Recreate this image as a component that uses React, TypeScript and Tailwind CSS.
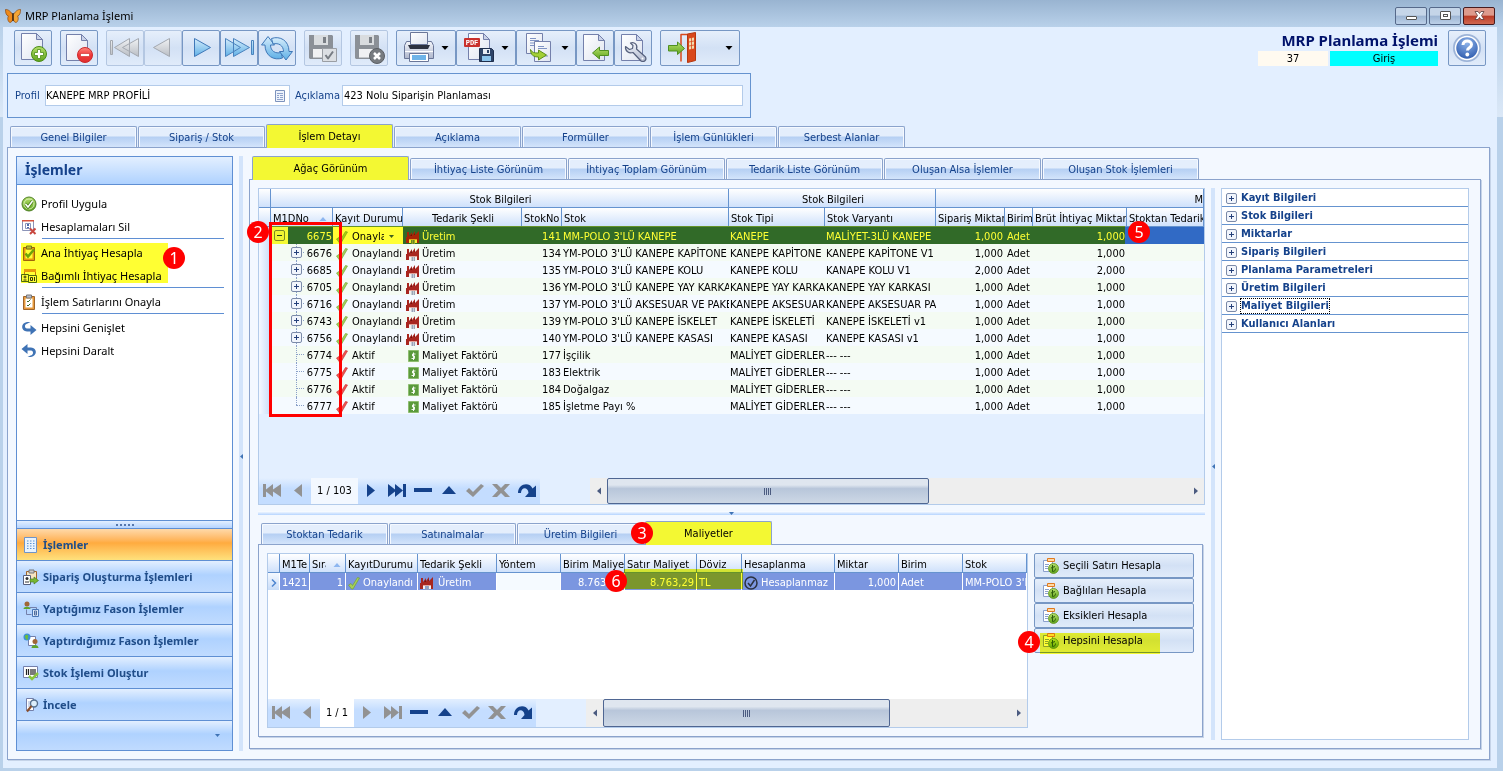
import React from "react";

type Children = { children?: React.ReactNode };

const Badge: React.FC<{ n: number; className: string }> = ({ n, className }) => (
    <span className={`absolute z-20 flex size-[22px] items-center justify-center rounded-full bg-[#ff0000] font-['Noto_Sans',sans-serif] text-base text-white ${className}`}>
        {n}
    </span>
);

const Marker: React.FC<{ className: string }> = ({ className }) => (
    <span className={`pointer-events-none absolute z-10 bg-[#ffff33] mix-blend-multiply ${className}`}/>
);

const Caret: React.FC<{ className?: string }> = ({ className = "" }) => (
    <svg className={`h-1 w-2 shrink-0 ${className}`} viewBox="0 0 8 4" fill="currentColor"><path d="M.5 0h7L4 4z"/></svg>
);

/* ---------- toolbar icons ---------- */

const Gradients: React.FC = () => (
    <svg className="absolute size-0" aria-hidden="true">
        <defs>
            <linearGradient id="paper" x1="0" y1="0" x2="1" y2="1"><stop stopColor="#fff"/><stop offset="1" stopColor="#dfe4f0"/></linearGradient>
            <linearGradient id="green" x1="0" y1="0" x2="0" y2="1"><stop stopColor="#b5e06a"/><stop offset="1" stopColor="#5fa41d"/></linearGradient>
            <linearGradient id="red" x1="0" y1="0" x2="0" y2="1"><stop stopColor="#ff8a80"/><stop offset=".5" stopColor="#f0383a"/><stop offset="1" stopColor="#e03030"/></linearGradient>
            <linearGradient id="blue" x1="0" y1="0" x2="0" y2="1"><stop stopColor="#d5ecfb"/><stop offset="1" stopColor="#5fb0e6"/></linearGradient>
            <linearGradient id="grey" x1="0" y1="0" x2="0" y2="1"><stop stopColor="#f0f2f4"/><stop offset="1" stopColor="#b9bdc4"/></linearGradient>
            <linearGradient id="steel" x1="0" y1="0" x2="0" y2="1"><stop stopColor="#f4f6fb"/><stop offset="1" stopColor="#aeb6cc"/></linearGradient>
            <radialGradient id="help" cx=".5" cy=".3" r=".7"><stop stopColor="#8fb4ea"/><stop offset="1" stopColor="#2553a8"/></radialGradient>
        </defs>
    </svg>
);

const Icon: React.FC<Children> = ({ children }) => (
    <svg className="h-[34px] w-9 shrink-0" viewBox="0 0 36 34" fill="none" strokeLinejoin="round">{children}</svg>
);

const WideIcon: React.FC<Children> = ({ children }) => (
    <svg className="h-[34px] w-11 shrink-0" viewBox="0 0 44 34" fill="none" strokeLinejoin="round">{children}</svg>
);

const Page: React.FC<{ x: number; y: number }> = ({ x, y }) => (
    <g transform={`translate(${x} ${y})`} fill="url(#paper)" stroke="#7480ab">
        <path d="M.5.5h15l6 6v20H.5z"/>
        <path d="M15.5.5v6h6z" fill="#c9d2e8"/>
    </g>
);

const GreyFloppy: React.FC = () => (
    <>
        <path d="M4 4h23l1 1v23H5l-1-1z" fill="#8b9097"/>
        <path d="M9 4h14v10H9z" fill="#d9dcdf"/>
        <path d="M18 6h3v6h-3z" fill="#7a7f86"/>
        <path d="M8 18h16v8H8z" fill="#f0f1f3"/>
        <path d="M8 26.500h16" stroke="#c3c6ca"/>
    </>
);

const NewIcon = () => (
    <Icon>
        <Page x={6} y={2}/>
        <circle cx="24" cy="23" r="7.5" fill="url(#green)" stroke="#4b8c17"/>
        <path d="M22.5 18.5h3v3h3v3h-3v3h-3v-3h-3v-3h3z" fill="#fff" stroke="#4b8c17" strokeWidth=".8"/>
    </Icon>
);

const DeleteIcon = () => (
    <Icon>
        <Page x={5} y={3}/>
        <circle cx="24" cy="24" r="7.5" fill="url(#red)" stroke="#cc2a2c"/>
        <path d="M19.5 22.5h9v3h-9z" fill="#fff" stroke="#c22" strokeWidth=".6"/>
    </Icon>
);

const FirstIcon = () => (
    <Icon>
        <g fill="url(#grey)" stroke="#a3a8b0">
            <path d="M3.5 9.5h2v14h-2zM22.5 7.5v18L7.5 16.5zM31.5 7.5v18l-16-9z"/>
        </g>
    </Icon>
);

const PrevIcon = () => <Icon><path d="M24.5 7.5v18l-16-9z" fill="url(#grey)" stroke="#a3a8b0"/></Icon>;
const NextIcon = () => <Icon><path d="M11.5 7.5v18l16-9z" fill="url(#blue)" stroke="#3f78b8"/></Icon>;

const LastIcon = () => (
    <Icon><path d="M4.5 7.5v18l15-9zM12.5 7.5v18l16-9zM30.5 9.5h2v14h-2z" fill="url(#blue)" stroke="#4a82bd"/></Icon>
);

const RefreshIcon = () => (
    <Icon>
        <g fill="url(#blue)" stroke="#3f78b8">
            <path d="M9 5.5l6.5 8.500h-4c0 6 5 9 10.500 7.500l1.500 5.500C15 30 6 25 6 14H2.500z"/>
            <path d="M27 29l-6.500-8.500h4c0-6-5-9-10.500-7.500L12.500 7.500C21 4.500 30 9.500 30 20.500h3.500z"/>
        </g>
    </Icon>
);

const SaveCheckIcon = () => (
    <Icon>
        <GreyFloppy/>
        <path d="M17.5 17.5h14v13h-14z" fill="#dcdfe3" stroke="#9a9ea4"/>
        <path d="M20.5 24l2.5 3.500 5-7" stroke="#777c83" strokeWidth="2"/>
    </Icon>
);

const SaveCancelIcon = () => (
    <Icon>
        <GreyFloppy/>
        <circle cx="26" cy="25" r="7.5" fill="#777b80" stroke="#5b5f64"/>
        <path d="M23 22l6 6m0-6l-6 6" stroke="#fff" strokeWidth="2.5"/>
    </Icon>
);

const PrintIcon = () => (
    <WideIcon>
        <path d="M9.5 10.5h25l2 4v13h-29v-13z" fill="url(#steel)" stroke="#6a7698"/>
        <path d="M13.5 1.5h17v12h-17z" fill="url(#paper)" stroke="#6a7698"/>
        <path d="M11 14h22l-2 4H13z" fill="#2c3140"/>
        <path d="M8 20.500h28" stroke="#fff"/>
        <path d="M12.5 22.5h19v8h-19z" fill="#fff" stroke="#6a7698"/>
        <path d="M15 24h14v5H15z" fill="#6fb4e8"/>
    </WideIcon>
);

const PdfIcon = () => (
    <WideIcon>
        <Page x={11} y={2}/>
        <rect x="7" y="7" width="16" height="9" rx="1" fill="#c9302c"/>
        <text x="15" y="14" textAnchor="middle" fontSize="7" fontWeight="700" fill="#fff" fontFamily="Liberation Mono, monospace">PDF</text>
        <path d="M22.5 17.5h12l2 2v11h-14z" fill="#2e4468" stroke="#1f2f4d"/>
        <path d="M26 18h7v5h-7z" fill="#e8edf5"/>
        <path d="M30 19h2v3h-2z" fill="#2e4468"/>
        <path d="M25 25h9v5h-9z" fill="#8cc4ec"/>
    </WideIcon>
);

const CopyIcon = () => (
    <WideIcon>
        <path d="M9.5 2.5h16v20h-16z" fill="url(#paper)" stroke="#7480ab"/>
        <path d="M13 7.500h6M13 9.500h9M13 12h5M13 14.500h5" stroke="#7f93c4"/>
        <path d="M17.5 10.5h16v20h-16z" fill="url(#paper)" stroke="#7480ab"/>
        <path d="M21 15.500h6M21 17.500h9M27 25h4" stroke="#7f93c4"/>
        <path d="M13.5 18.500c1 3 4 3.500 8 3.500v-3l8 5-8 5v-3c-5 0-8-2-8-7.500z" fill="#a3cf35" stroke="#5d8f1c"/>
    </WideIcon>
);

const PageBackIcon = () => (
    <Icon>
        <Page x={6} y={3}/>
        <path d="M15.5 22l7-6v3.500h9v5h-9V28z" fill="url(#green)" stroke="#4f8f22"/>
    </Icon>
);

const WrenchIcon = () => (
    <Icon>
        <Page x={6} y={3}/>
        <path d="M15.500 12c4-1.500 7.500 2 6 6l9 8c1.500 3-1.500 5.500-4.500 4l-8-8.500c-4 1.500-8-1.500-7.500-6l4 3 3-1 .5-3z" fill="url(#steel)" stroke="#56607c" strokeWidth="1.200"/>
        <circle cx="27.5" cy="27.5" r="1" fill="#fff"/>
    </Icon>
);

const DoorIcon = () => (
    <WideIcon>
        <path d="M20 30.5V3.5h7" stroke="#d9481c" strokeWidth="1.500"/>
        <path d="M26.500 3l8-1.500v28l-8 2z" fill="#d9481c" stroke="#b5370f"/>
        <path d="M28 7.5l5-1v11l-5 1z" fill="#f2ddb0"/>
        <path d="M30.5 7v11M28 11l5-1M28 15l5-1" stroke="#d9481c" strokeWidth=".8"/>
        <path d="M7.5 14.5h9V11l7 6.500-7 6V20h-9z" fill="url(#green)" stroke="#4f8f22"/>
    </WideIcon>
);

const Butterfly = () => (
    <svg className="size-4" viewBox="0 0 16 16">
        <path d="M8 7.500C6.500 4 3 1 .500 1.500c0 3 .5 6 3 6.500-1.500 2-.5 6 1.500 6.500 2 0 3-3 3-5.500z" fill="#ee8a1c" stroke="#8a4710" strokeWidth=".7"/>
        <path d="M8 7.500C9.500 4 13 1 15.500 1.500c0 3-.5 6-3 6.500 1.500 2 .5 6-1.500 6.500-2 0-3-3-3-5.500z" fill="#f4a637" stroke="#8a4710" strokeWidth=".7"/>
        <path d="M8 5v8" stroke="#3b2410" strokeWidth="1.4"/>
    </svg>
);

/* ---------- small icons ---------- */

const Small: React.FC<Children> = ({ children }) => (
    <svg className="size-4 shrink-0" viewBox="0 0 16 16" fill="none">{children}</svg>
);

const ApproveIcon = () => (
    <Small>
        <circle cx="8" cy="8" r="7" fill="url(#green)" stroke="#4f7f27"/>
        <circle cx="8" cy="8" r="5" stroke="#e4f5c8" strokeWidth=".8"/>
        <path d="M4.5 8l2.5 3 4.500-6" stroke="#4b7d1c" strokeWidth="3"/>
        <path d="M4.5 8l2.5 3 4.500-6" stroke="#fff" strokeWidth="1.5"/>
    </Small>
);

const ClearCalcIcon = () => (
    <Small>
        <path d="M1.5 1.5h11v10h-11z" fill="#fff" stroke="#8c94b8"/>
        <path d="M1 1h12v1.500H1z" fill="#d9533c"/>
        <path d="M4.500 4.500h5v5h-5z" stroke="#8c94b8"/>
        <path d="M6 5h2v2H6zM6 8h2v1H6z" fill="#4f6cab"/>
        <path d="M9 9.500l5.500 5.500M14.500 9.500L9 15" stroke="#c8473f" strokeWidth="2"/>
    </Small>
);

const ClipCheck: React.FC<{ green?: boolean }> = ({ green }) => (
    <Small>
        <path d="M2.5 2.5h11v13h-11z" fill="#e79a3c" stroke="#a0652a"/>
        <path d="M4.5 4.5h7v9h-7z" fill="#fff"/>
        <path d="M5.5 1h5v3h-5z" fill="#b9bcc8" stroke="#777"/>
        {green
            ? <path d="M4.5 8.500l2.500 3L13 4.500" stroke="#6da52b" strokeWidth="2.5"/>
            : <path d="M6 7l1 1 2.500-2.500M6 11l1 1 2.500-2.500" stroke="#3f6b2a"/>}
    </Small>
);

const NumbersIcon = () => (
    <Small>
        <path d="M3.5 1.5h11v10h-11z" fill="#fff" stroke="#c47a2c"/>
        <path d="M3 1h12v3H3z" fill="#e79a3c"/>
        <path d="M.5 6.5h7v7h-7zM7.500 7.500h8v7h-8z" fill="#fff" stroke="#4d6a3c"/>
        <path d="M2.500 9h3M4 7.500v3M2.500 12h3M9.500 9.500h2v3h-2zM13.500 9v4" stroke="#333"/>
    </Small>
);

const TurnArrow: React.FC<{ up?: boolean }> = ({ up }) => (
    <Small>
        <g transform={up ? "matrix(-1 0 0 -1 16 16)" : undefined}>
            <path d="M9.5 2H6C-.5 3-.5 11 6 11.500h3.500V15l6-5-6-5v3.500H6C3 8 3.500 4 6.500 3.500z" fill="#3f73b5"/>
        </g>
    </Small>
);

const ListIcon = () => (
    <Small>
        <path d="M1.5.5h12v15h-12z" fill="#e9f3fd" stroke="#6f94c8"/>
        <path d="M4 4h1.500M7 4h1.500M10 4h1.500M4 6.500h1.500M7 6.500h1.500M10 6.500h1.500M4 9h1.500M7 9h1.500M10 9h1.500M4 11.500h1.500M7 11.500h1.500M10 11.500h1.500" stroke="#5b93d6"/>
    </Small>
);

const OrderIcon = () => (
    <Small>
        <path d="M3.5 2.5h10v10h-10z" fill="#f5e3c0" stroke="#a0652a"/>
        <path d="M6 1h5v3H6z" fill="#ccc" stroke="#777"/>
        <path d="M.5 6.5h7v9h-7z" fill="#fff" stroke="#56607c"/>
        <circle cx="4" cy="9.5" r="1.5" fill="#333"/>
        <path d="M2 13h4" stroke="#333"/>
        <path d="M7 10h4V8l4.500 3.500L11 15v-2H7z" fill="#78b833" stroke="#4b8020" strokeWidth=".7"/>
    </Small>
);

const PersonBoxIcon = () => (
    <Small>
        <circle cx="4" cy="3" r="2.5" fill="#a06636"/>
        <path d="M.5 8c0-3 7-3 7 0z" fill="#5fa52c"/>
        <path d="M3.5 8.500v5h5M6.500 6.500h7v3" stroke="#7480ab"/>
        <path d="M9.5 8.500h6v7h-6z" fill="#dbe9fa" stroke="#4876b5"/>
        <path d="M11.5 10v4M11.500 10h2v4h-2M11.500 12h2" stroke="#33548c" strokeWidth=".8"/>
    </Small>
);

const GlobePersonIcon = () => (
    <Small>
        <path d="M5.5 3.5h7v9h-7z" fill="#fff" stroke="#7480ab"/>
        <circle cx="4" cy="4" r="3.5" fill="#3f8ed6"/>
        <path d="M2 3c2-3 4 0 3 1s1 2-1 3c-1-1-2-2-2-4z" fill="#6bbf3a"/>
        <circle cx="12" cy="8.5" r="2.5" fill="#a06636"/>
        <path d="M8.5 15c0-4 7-4 7 0z" fill="#5fa52c"/>
    </Small>
);

const BarcodeIcon = () => (
    <Small>
        <path d="M.5 1.5h14v11H.5z" fill="#fff" stroke="#7480ab"/>
        <path d="M3.500 4v6M5.500 4v6M8 4v6M10 4v6M12 4v6" stroke="#222" strokeWidth="1.2"/>
        <path d="M6 11l3 3 6-6" stroke="#8cc63f" strokeWidth="2.5"/>
    </Small>
);

const InspectIcon = () => (
    <Small>
        <path d="M3.5 1.5h7v12h-7z" fill="#fff" stroke="#7480ab"/>
        <path d="M5 5h4M5 7h3M5 9h3" stroke="#9fb0d6"/>
        <circle cx="11" cy="6.5" r="3.5" fill="#dceefb" stroke="#56708f" strokeWidth="1.4"/>
        <path d="M8.5 9L4 14.500" stroke="#8a4e2a" strokeWidth="2"/>
    </Small>
);

const LiraIcon = () => (
    <Small>
        <path d="M.5 2.5h9v11h-9z" fill="#fff" stroke="#8ba0cc"/>
        <path d="M2 6.500h4M2 8.500h3M2 10.500h3" stroke="#8ba0cc"/>
        <path d="M4.5.5h7v3h-7z" fill="#ffd9a6" stroke="#e07a1f"/>
        <circle cx="10.5" cy="10.5" r="5" fill="url(#green)" stroke="#5d8f1c" strokeWidth=".8"/>
        <path d="M9.5 7v6.500c2 0 3-1 3-3M8 10l4-1.500" stroke="#2d5c0c"/>
    </Small>
);

const CheckIcon: React.FC<{ color: string; shade: string }> = ({ color, shade }) => (
    <svg className="h-[14px] w-3 shrink-0" viewBox="0 0 12 14" fill="none">
        <path d="M.5 9L3 7.500 4.500 9.500 9.500 1.500 11.500 2 5 13H3.500z" fill={color} stroke={shade} strokeWidth=".6"/>
    </svg>
);

const FactoryIcon = () => (
    <svg className="size-[14px] shrink-0" viewBox="0 0 14 14">
        <path d="M0 13V7h1V2h2v4l3-4v3l3-4v4l4-4v12h-2V9H3v4z" fill="#a8261f"/>
        <path d="M4 6l2-2v2zM8 5l1-2v2z" fill="#6f130f"/>
        <path d="M3 9h8v1H3z" fill="#e2a49b"/>
        <path d="M3 10h2v3H3zM9 10h2v3H9z" fill="#f4efec"/>
        <path d="M5.500 10h1.500v4H5.500zM7.500 10H9v4H7.500z" fill="#9aa3b5"/>
    </svg>
);

const MoneyIcon = () => (
    <svg className="size-[14px] shrink-0" viewBox="0 0 14 14" fill="none">
        <path d="M2.5 1.5h10v11h-10z" fill="#5b9a3c" stroke="#8dbd6f"/>
        <path d="M9.500 5h-3v2h2v2.500H5.500M7.500 3.500v7.500" stroke="#fff" strokeWidth=".9"/>
    </svg>
);

const ToggleBox: React.FC<{ open?: boolean; className?: string }> = ({ open, className = "" }) => (
    <svg className={`size-[11px] shrink-0 ${className}`} viewBox="0 0 11 11" fill="none">
        <rect x=".5" y=".5" width="10" height="10" rx="1.5" fill="#f1f5fc" stroke="#7b8aa8"/>
        <path d={open ? "M3 5.500h5" : "M3 5.500h5M5.500 3v5"} stroke="#25407a"/>
    </svg>
);

/* ---------- building blocks ---------- */

const ToolButton: React.FC<Children & { label: string; disabled?: boolean; className?: string }> = ({ label, disabled, className = "w-[38px]", children }) => (
    <button
        type="button"
        aria-label={label}
        disabled={disabled}
        className={`flex h-9 shrink-0 items-center rounded-xs border bg-linear-to-b from-[#e6effb] via-[#d3e1f5] to-[#e0ebfa] ${disabled ? "border-[#b4c7e2]" : "border-[#7797c4]"} ${className}`}
    >
        {children}
    </button>
);

const TabStrip: React.FC<{ tabs: string[]; active: number; width: string; className?: string; badge?: number }> = ({ tabs, active, width, className = "", badge }) => (
    <div role="tablist" className={`flex h-[23px] shrink-0 items-end gap-px pl-[3px] ${className}`}>
        {tabs.map((tab, i) => i === active ? (
            <button key={tab} type="button" role="tab" aria-selected="true" className={`relative z-10 -mb-px h-6 rounded-t-xs border border-b-0 border-[#8ba3cc] bg-[#f3f8ff] pt-px text-black ${width}`}>
                {tab}
                <Marker className="inset-0"/>
                {badge && <Badge n={badge} className="top-0 -left-[15px]"/>}
            </button>
        ) : (
            <button key={tab} type="button" role="tab" aria-selected="false" className={`h-[21px] rounded-t-xs border border-b-0 border-[#8ba3cc] bg-linear-to-b from-[#e4eefc] from-45% via-[#b5cff3] via-50% to-[#d3e4fb] pt-[2px] text-[#15428b] shadow-[inset_1px_1px_0_#f5f9ff,inset_-1px_0_0_#f5f9ff] ${width}`}>
                {tab}
            </button>
        ))}
    </div>
);

const pagerShapes = [
    { label: "Sonraki", d: "M6 2l8 6.500L6 15z" },
    { label: "Son", d: "M1 2l7 5.500V2l8 6.500V2h3v13h-3V8.500L8 15V9.500L1 15z" },
    { label: "Sil", d: "M1 6h18v4H1z" },
    { label: "Düzenle", d: "M3 12l7-8 7 8z" },
    { label: "Kaydet", d: "M1 9l3-3 4 4 8-8 3 2L8 15z" },
    { label: "Vazgeç", d: "M1 2h5l4 4 4-4h5l-6 6.500 6 6.500h-5l-4-4-4 4H1l6-6.500z" },
    { label: "Yenile", d: "M1 11C1 1 13-.5 15.500 6.500L19 3.500V15H8l3.500-4C11 4.500 4 5 4 11z" },
];

const PagerButton: React.FC<{ label: string; d: string; off: boolean }> = ({ label, d, off }) => (
    <button type="button" aria-label={label} disabled={off} className="flex w-[26px] items-center justify-center bg-linear-to-b from-[#e3efff] via-[#c4ddff] via-40% to-[#c4ddff]">
        <svg className={`h-4 w-5 ${off ? "text-[#929292]" : "text-[#15428b]"}`} viewBox="0 1 20 16" fill="currentColor"><path d={d}/></svg>
    </button>
);

const Pager: React.FC<{ text: string; textClass: string; off: string[]; height: string; thumb: string }> = ({ text, textClass, off, height, thumb }) => (
    <div className={`flex shrink-0 bg-[#e3efff] ${height}`}>
        <PagerButton label="İlk" off d="M1 2h3v5.500L11 2v5.500L19 2v13l-8-5.500V15L4 9.500V15H1z"/>
        <PagerButton label="Önceki" off d="M14 2L6 8.500l8 6.500z"/>
        <span className={`flex shrink-0 items-center justify-center ${textClass}`}>{text}</span>
        {pagerShapes.map((s) => <PagerButton key={s.label} label={s.label} d={s.d} off={off.includes(s.label)}/>)}
        <div className="ml-[50px] flex min-w-0 flex-1 bg-[#eeeeee]">
            <span className="flex w-[17px] items-center justify-center text-[#4b5b80]"><Caret className="rotate-90"/></span>
            <div className="min-w-0 flex-1">
                <div className={`flex h-full items-center justify-center gap-px rounded-xs border border-[#4f6692] bg-linear-to-b from-[#dfe6ef] from-25% via-[#b8c6da] via-40% to-[#cdd8e6] ${thumb}`}>
                    {[0, 1, 2, 3].map((i) => <i key={i} className="h-[7px] w-px bg-[#4b5b80]"/>)}
                </div>
            </div>
            <span className="flex w-[17px] items-center justify-center text-[#4b5b80]"><Caret className="-rotate-90"/></span>
        </div>
    </div>
);

const Th: React.FC<Children & { className?: string; colSpan?: number }> = ({ children, className = "", colSpan }) => (
    <th colSpan={colSpan} className={`h-[19px] overflow-hidden border-r border-b border-[#6593cf] bg-linear-to-b from-white to-[#cfe1fb] p-0 pt-[3px] pl-[2px] font-normal ${className}`}>
        {children}
    </th>
);

const SortMark = () => <Caret className="rotate-180 text-[#8db6f0]"/>;

/* ---------- top of the window ---------- */

const TitleBar: React.FC = () => (
    <header className="flex h-[27px] shrink-0 items-center gap-1 bg-linear-to-b from-[#99b4d1] to-[#b9d1ea] pt-1 pr-2 pl-[5px]">
        <Butterfly/>
        <h1 className="flex-1 font-['Noto_Sans',sans-serif] text-[11px] text-black">MRP Planlama İşlemi</h1>
        <div className="flex gap-[2px]">
            <button type="button" aria-label="Küçült" className="flex h-[18px] w-8 items-center justify-center rounded-xs border border-[#56698a] bg-linear-to-b from-[#c5d5e8] from-45% via-[#9db5d3] via-50% to-[#bcd0e8]">
                <i className="mt-1 h-1 w-[11px] rounded-[1px] border border-[#555] bg-white"/>
            </button>
            <button type="button" aria-label="Büyüt" className="flex h-[18px] w-8 items-center justify-center rounded-xs border border-[#56698a] bg-linear-to-b from-[#c5d5e8] from-45% via-[#9db5d3] via-50% to-[#bcd0e8]">
                <i className="flex h-[9px] w-[11px] items-center justify-center rounded-[1px] border border-[#555] bg-white"><i className="h-[3px] w-[5px] border border-[#555]"/></i>
            </button>
            <button type="button" aria-label="Kapat" className="flex h-[18px] w-8 items-center justify-center rounded-xs border border-[#471b1e] bg-linear-to-b from-[#dd9a8c] from-45% via-[#b93a25] via-50% to-[#d0664f]">
                <svg className="h-[9px] w-[11px]" viewBox="0 0 11 9"><path d="M1 .5h3l1.500 2L7 .5h3L7.500 4.500l2.500 4H7l-1.500-2-1.500 2H1l2.500-4z" fill="#fff" stroke="#5b3a3a" strokeWidth=".8"/></svg>
            </button>
        </div>
    </header>
);

const Toolbar: React.FC = () => (
    <div className="flex justify-between pt-[3px] pr-1 pl-[7px]">
        <div className="flex gap-2">
            <ToolButton label="Yeni"><NewIcon/></ToolButton>
            <ToolButton label="Sil"><DeleteIcon/></ToolButton>
            <div className="flex">
                <ToolButton label="İlk kayıt" disabled><FirstIcon/></ToolButton>
                <ToolButton label="Önceki kayıt" disabled><PrevIcon/></ToolButton>
                <ToolButton label="Sonraki kayıt"><NextIcon/></ToolButton>
                <ToolButton label="Son kayıt"><LastIcon/></ToolButton>
                <ToolButton label="Yenile"><RefreshIcon/></ToolButton>
            </div>
            <ToolButton label="Kaydet" disabled><SaveCheckIcon/></ToolButton>
            <ToolButton label="Vazgeç" disabled><SaveCancelIcon/></ToolButton>
            <div className="flex">
                <ToolButton label="Yazdır" className="w-[60px]"><PrintIcon/><Caret className="text-black"/></ToolButton>
                <ToolButton label="PDF kaydet" className="w-[60px]"><PdfIcon/><Caret className="text-black"/></ToolButton>
                <ToolButton label="Kopyala" className="w-[60px]"><CopyIcon/><Caret className="text-black"/></ToolButton>
                <ToolButton label="Aktar"><PageBackIcon/></ToolButton>
                <ToolButton label="Ayarlar"><WrenchIcon/></ToolButton>
            </div>
            <ToolButton label="Çıkış" className="w-20"><DoorIcon/><Caret className="ml-5 text-black"/></ToolButton>
        </div>
        <div className="flex gap-[10px]">
            <div className="flex flex-col items-end justify-between">
                <h2 className="font-['Noto_Sans',sans-serif] text-[15px] leading-[20px] font-bold text-[#00126b]">MRP Planlama İşlemi</h2>
                <div className="flex gap-[2px] text-center leading-[15px] text-black">
                    <span className="w-[70px] bg-[#fffaf0]">37</span>
                    <span className="w-[108px] bg-[#00ffff]">Giriş</span>
                </div>
            </div>
            <ToolButton label="Yardım">
                <Icon>
                    <circle cx="18" cy="17" r="13" fill="url(#help)" stroke="#9db4d8" strokeWidth="2"/>
                    <circle cx="18" cy="17" r="11.5" stroke="#fff" strokeWidth="1.5"/>
                    <path d="M14 14c0-5.500 8.500-5 8.500-.5 0 3.500-4 3-4 6" stroke="#fff" strokeWidth="3"/>
                    <circle cx="18.3" cy="23.5" r="1.9" fill="#fff"/>
                </Icon>
            </ToolButton>
        </div>
    </div>
);

const ProfileForm: React.FC = () => (
    <form className="mt-[7px] flex h-[45px] max-w-[744px] items-center border border-[#6593cf] px-[7px] text-[#15428b]">
        <label htmlFor="profil" className="w-[30px] shrink-0">Profil</label>
        <div className="flex h-[21px] w-[245px] items-center border border-[#b3cbea] bg-white pr-1">
            <input id="profil" defaultValue="KANEPE MRP PROFİLİ" className="min-w-0 flex-1 text-black outline-none"/>
            <svg className="h-3 w-[10px]" viewBox="0 0 10 12" fill="none"><path d="M.5.5h9v11h-9z" fill="#eef3fb" stroke="#7d93bd"/><path d="M2 3.500h6M2 5.500h2M5 5.500h3M2 7.500h2M5 7.500h3M2 9.500h6" stroke="#8fa3cc"/></svg>
        </div>
        <label htmlFor="aciklama" className="ml-[5px] w-[47px] shrink-0">Açıklama</label>
        <input id="aciklama" defaultValue="423 Nolu Siparişin Planlaması" className="h-[21px] min-w-0 flex-1 border border-[#b3cbea] bg-white px-px text-black outline-none"/>
    </form>
);

/* ---------- left side ---------- */

const Action: React.FC<{ icon: React.ReactNode; label: string }> = ({ icon, label }) => (
    <button type="button" className="flex h-[23px] w-full items-center gap-1 pl-1 text-left text-black">{icon}{label}</button>
);

const Rule = () => <div className="mr-2 ml-[25px] h-[3px] border-t border-[#5f8fd3]"/>;

const navItems = [
    { label: "İşlemler", icon: <ListIcon/> },
    { label: "Sipariş Oluşturma İşlemleri", icon: <OrderIcon/> },
    { label: "Yaptığımız Fason İşlemler", icon: <PersonBoxIcon/> },
    { label: "Yaptırdığımız Fason İşlemler", icon: <GlobePersonIcon/> },
    { label: "Stok İşlemi Oluştur", icon: <BarcodeIcon/> },
    { label: "İncele", icon: <InspectIcon/> },
];

const Sidebar: React.FC = () => (
    <aside className="flex w-[217px] shrink-0 flex-col border border-[#5f8fd3] bg-white font-['Noto_Sans',sans-serif]">
        <h2 className="h-7 border-b border-[#5f8fd3] bg-linear-to-b from-[#e3efff] to-[#afd2ff] pl-2 text-sm leading-[26px] font-bold text-[#15428b]">İşlemler</h2>
        <div className="relative flex-1 pt-[7px]">
            <Action icon={<ApproveIcon/>} label="Profil Uygula"/>
            <Action icon={<ClearCalcIcon/>} label="Hesaplamaları Sil"/>
            <Rule/>
            <Action icon={<ClipCheck green/>} label="Ana İhtiyaç Hesapla"/>
            <Action icon={<NumbersIcon/>} label="Bağımlı İhtiyaç Hesapla"/>
            <Rule/>
            <Action icon={<ClipCheck/>} label="İşlem Satırlarını Onayla"/>
            <Rule/>
            <Action icon={<TurnArrow/>} label="Hepsini Genişlet"/>
            <Action icon={<TurnArrow up/>} label="Hepsini Daralt"/>
            <Marker className="top-[58px] left-1 h-10 w-[147px]"/>
            <Badge n={1} className="top-[62px] left-[146px]"/>
        </div>
        <div className="flex h-2 items-center justify-center gap-[2px] border-t border-[#5f8fd3] bg-linear-to-b from-[#e3efff] to-[#b5d4ff]">
            {[0, 1, 2, 3, 4].map((i) => <i key={i} className="size-[2px] bg-[#5677ad]"/>)}
        </div>
        <nav>
            {navItems.map((item, i) => (
                <button
                    key={item.label}
                    type="button"
                    className={`flex h-8 w-full items-center gap-1 border-t border-[#5f8fd3] pl-[6px] text-left text-[11px] font-bold text-[#204d89] bg-linear-to-b ${i === 0 ? "from-[#ffd9a8] via-[#ffab3f] via-45% to-[#fee17c]" : "from-[#e3efff] from-0% via-[#afd2ff] via-45% to-[#c0dbff]"}`}
                >
                    {item.icon}{item.label}
                </button>
            ))}
        </nav>
        <div className="flex h-[30px] items-center justify-end border-t border-[#5f8fd3] bg-linear-to-b from-[#e3efff] via-[#afd2ff] via-45% to-[#c0dbff] pr-3 text-[#3f73b5]">
            <svg className="h-[3px] w-[5px]" viewBox="0 0 5 3" fill="currentColor"><path d="M0 0h5L2.500 3z"/></svg>
        </div>
    </aside>
);

const Splitter: React.FC = () => (
    <div className="relative flex w-4 shrink-0 justify-center">
        <div className="w-1 bg-[#d3e4fb]"/>
        <svg className="absolute top-1/2 h-[5px] w-[3px] text-[#3f73b5]" viewBox="0 0 3 5" fill="currentColor"><path d="M3 0v5L0 2.500z"/></svg>
    </div>
);

/* ---------- stock tree ---------- */

type Row = { id: number; no: number; stok: string; tip: string; varyant: string; miktar: string };

const rows: Row[] = [
    { id: 6675, no: 141, stok: "MM-POLO 3'LÜ KANEPE", tip: "KANEPE", varyant: "MALİYET-3LÜ KANEPE", miktar: "1,000" },
    { id: 6676, no: 134, stok: "YM-POLO 3'LÜ KANEPE KAPİTONE", tip: "KANEPE KAPİTONE", varyant: "KANEPE KAPİTONE V1", miktar: "1,000" },
    { id: 6685, no: 135, stok: "YM-POLO 3'LÜ KANEPE KOLU", tip: "KANEPE KOLU", varyant: "KANAPE KOLU V1", miktar: "2,000" },
    { id: 6705, no: 136, stok: "YM-POLO 3'LÜ KANEPE YAY KARKASI", tip: "KANEPE YAY KARKASI", varyant: "KANEPE YAY KARKASI", miktar: "1,000" },
    { id: 6716, no: 137, stok: "YM-POLO 3'LÜ AKSESUAR VE PAKET", tip: "KANEPE AKSESUAR", varyant: "KANEPE AKSESUAR PA", miktar: "1,000" },
    { id: 6743, no: 139, stok: "YM-POLO 3'LÜ KANEPE İSKELET", tip: "KANEPE İSKELETİ", varyant: "KANEPE İSKELETİ v1", miktar: "1,000" },
    { id: 6756, no: 140, stok: "YM-POLO 3'LÜ KANEPE KASASI", tip: "KANEPE KASASI", varyant: "KANEPE KASASI v1", miktar: "1,000" },
    { id: 6774, no: 177, stok: "İşçilik", tip: "MALİYET GİDERLER", varyant: "--- ---", miktar: "1,000" },
    { id: 6775, no: 183, stok: "Elektrik", tip: "MALİYET GİDERLER", varyant: "--- ---", miktar: "1,000" },
    { id: 6776, no: 184, stok: "Doğalgaz", tip: "MALİYET GİDERLER", varyant: "--- ---", miktar: "1,000" },
    { id: 6777, no: 185, stok: "İşletme Payı %", tip: "MALİYET GİDERLER", varyant: "--- ---", miktar: "1,000" },
];

const Cell: React.FC<Children & { className?: string }> = ({ children, className = "" }) => (
    <td className={`overflow-hidden p-0 pt-[2px] ${className}`}>{children}</td>
);

const TreeRow: React.FC<{ row: Row; index: number }> = ({ row, index }) => {
    const root = index === 0;
    const cost = index > 6;
    const last = index === rows.length - 1;

    return (
        <tr className={`h-[17px] ${root ? "bg-[#316ac5] text-white" : index % 2 ? "bg-[#f4fbf3]" : "bg-[#f5faff]"}`}>
            <td className="bg-linear-to-r from-[#f5f9ff] to-[#c8dcf8] p-0"/>
            <td className="p-0">
                <div className="flex h-[17px] items-center">
                    {root ? (
                        <span className="flex h-full w-[17px] items-center bg-[#f5faff] pl-[3px]"><ToggleBox open/></span>
                    ) : (
                        <span className="relative flex h-full w-9 items-center justify-center">
                            <i className={`absolute top-0 left-[25px] border-l border-dotted border-[#8aa0c8] ${last ? "h-2" : "h-full"}`}/>
                            <i className="absolute top-2 left-[25px] w-2 border-t border-dotted border-[#8aa0c8]"/>
                            {!cost && <ToggleBox className="relative ml-4"/>}
                        </span>
                    )}
                    <span className="flex-1 pt-[2px] pr-px text-right">{row.id}</span>
                </div>
            </td>
            <Cell className={root ? "bg-white text-black" : ""}>
                <div className="flex items-center gap-1 pl-[3px]">
                    {cost ? <CheckIcon color="#ef5350" shade="#c62828"/> : <CheckIcon color="#a4cf5a" shade="#6f9c2c"/>}
                    {root ? (
                        <>
                            <select aria-label="Kayıt Durumu" className="w-8 appearance-none overflow-hidden outline-none">
                                <option>Onaylandı</option>
                            </select>
                            <svg className="ml-px h-[3px] w-[5px] text-[#3f5f95]" viewBox="0 0 5 3" fill="currentColor"><path d="M0 0h5L2.500 3z"/></svg>
                        </>
                    ) : cost ? "Aktif" : "Onaylandı"}
                </div>
            </Cell>
            <Cell>
                <div className="flex items-center gap-[2px] pl-[3px]">
                    {cost ? <MoneyIcon/> : <FactoryIcon/>}{cost ? "Maliyet Faktörü" : "Üretim"}
                </div>
            </Cell>
            <Cell className="pr-px text-right">{row.no}</Cell>
            <Cell className="pl-px">{row.stok}</Cell>
            <Cell className="pl-px">{row.tip}</Cell>
            <Cell className="pl-px">{row.varyant}</Cell>
            <Cell className="pr-[2px] text-right">{row.miktar}</Cell>
            <Cell className="pl-[2px]">Adet</Cell>
            <Cell className="pr-[2px] text-right">{row.miktar}</Cell>
            <Cell/>
        </tr>
    );
};

const StockTree: React.FC = () => (
    <section className="relative flex flex-1 flex-col border border-[#b3cbea] bg-[#e3efff]">
        <div className="relative min-h-0 flex-1 overflow-hidden">
            <table className="w-full table-fixed border-separate border-spacing-0 whitespace-nowrap text-black">
                <colgroup>
                    <col className="w-3"/><col className="w-[62px]"/><col className="w-[70px]"/><col className="w-[119px]"/>
                    <col className="w-[40px]"/><col className="w-[167px]"/><col className="w-24"/><col className="w-[111px]"/>
                    <col className="w-[69px]"/><col className="w-7"/><col className="w-[94px]"/><col/>
                </colgroup>
                <thead>
                    <tr>
                        <Th/>
                        <Th colSpan={5}>Stok Bilgileri</Th>
                        <Th colSpan={2}>Stok Bilgileri</Th>
                        <Th colSpan={4} className="text-right">M</Th>
                    </tr>
                    <tr>
                        <Th/>
                        <Th><span className="flex items-center justify-between pr-[5px]">M1DNo<SortMark/></span></Th>
                        <Th className="text-left">Kayıt Durumu</Th>
                        <Th>Tedarik Şekli</Th>
                        <Th className="text-left">StokNo</Th>
                        <Th className="text-left">Stok</Th>
                        <Th className="text-left">Stok Tipi</Th>
                        <Th className="text-left">Stok Varyantı</Th>
                        <Th className="text-left">Sipariş Miktar</Th>
                        <Th className="text-left">Birim</Th>
                        <Th className="text-left">Brüt İhtiyaç Miktar</Th>
                        <Th className="text-left">Stoktan Tedarik</Th>
                    </tr>
                </thead>
                <tbody>
                    {rows.map((row, i) => <TreeRow key={row.id} row={row} index={i}/>)}
                </tbody>
            </table>
            <Marker className="top-[37px] left-3 h-[18px] w-[854px]"/>
        </div>
        <Pager text="1 / 103" textClass="w-[47px] bg-[#f3f8ff]" height="h-[26px]" off={["Kaydet", "Vazgeç"]} thumb="w-[55.5%]"/>
        <div className="pointer-events-none absolute top-[33px] left-[10px] h-[195px] w-[73px] border-3 border-[#ff0000]"/>
        <Badge n={2} className="top-8 -left-3"/>
        <Badge n={5} className="top-8 left-[869px]"/>
    </section>
);

/* ---------- cost grid ---------- */

const costActions = ["Seçili Satırı Hesapla", "Bağlıları Hesapla", "Eksikleri Hesapla", "Hepsini Hesapla"];

const Td: React.FC<Children & { className?: string }> = ({ children, className = "" }) => (
    <td className={`h-[18px] overflow-hidden border-r border-b border-white p-0 px-[2px] pt-[2px] ${className}`}>{children}</td>
);

const CostPanel: React.FC = () => (
    <section className="mr-[2px] flex h-[193px] shrink-0 gap-[6px] border border-[#8ba3cc] p-2 shadow-[1px_1px_0_#c5d3e8]">
        <div className="relative flex min-w-0 flex-1 flex-col border border-[#b3cbea] bg-white">
            <div className="min-h-0 flex-1 overflow-hidden">
                <table className="w-full table-fixed border-separate border-spacing-0 whitespace-nowrap text-black">
                    <colgroup>
                        <col className="w-3"/><col className="w-[30px]"/><col className="w-9"/><col className="w-[72px]"/>
                        <col className="w-[79px]"/><col className="w-16"/><col className="w-16"/><col className="w-[72px]"/>
                        <col className="w-[45px]"/><col className="w-[93px]"/><col className="w-16"/><col className="w-16"/><col/>
                    </colgroup>
                    <thead>
                        <tr className="text-left">
                            <Th/>
                            <Th>M1Te</Th>
                            <Th><span className="flex items-center justify-between pr-1"><span className="w-[14px] overflow-hidden">Sıra</span><SortMark/></span></Th>
                            <Th>KayıtDurumu</Th>
                            <Th>Tedarik Şekli</Th>
                            <Th>Yöntem</Th>
                            <Th>Birim Maliyet</Th>
                            <Th>Satır Maliyet</Th>
                            <Th>Döviz</Th>
                            <Th>Hesaplanma</Th>
                            <Th>Miktar</Th>
                            <Th>Birim</Th>
                            <Th>Stok</Th>
                        </tr>
                    </thead>
                    <tbody>
                        <tr className="bg-[#7b96e0] text-white">
                            <Td className="bg-linear-to-b from-[#f5f9ff] to-[#c8dcf8]">
                                <svg className="ml-px h-2 w-[6px]" viewBox="0 0 6 8" fill="none"><path d="M1 .5L4.500 4 1 7.500" stroke="#4f86d0" strokeWidth="1.5"/></svg>
                            </Td>
                            <Td className="text-right">1421</Td>
                            <Td className="text-right">1</Td>
                            <Td><span className="flex items-center gap-[3px]"><CheckIcon color="#a4cf5a" shade="#6f9c2c"/>Onaylandı</span></Td>
                            <Td><span className="flex items-center gap-1"><FactoryIcon/>Üretim</span></Td>
                            <Td className="bg-[#f5faff]"/>
                            <Td className="text-right">8.763,29</Td>
                            <Td className="text-right">8.763,29</Td>
                            <Td>TL</Td>
                            <Td>
                                <span className="flex items-center gap-[3px]">
                                    <svg className="size-[14px]" viewBox="0 0 14 14" fill="none"><circle cx="7" cy="7" r="6" stroke="#2b3140" strokeWidth="1.5"/><path d="M4 7l2.500 3L10.500 4" stroke="#2b3140" strokeWidth="1.5"/></svg>
                                    Hesaplanmaz
                                </span>
                            </Td>
                            <Td className="text-right">1,000</Td>
                            <Td>Adet</Td>
                            <Td>MM-POLO 3'LÜ KANEPE</Td>
                        </tr>
                    </tbody>
                </table>
            </div>
            <Pager text="1 / 1" textClass="w-[34px] bg-white" height="h-7" off={["Sonraki", "Son", "Kaydet", "Vazgeç"]} thumb="w-[70.5%]"/>
            <Marker className="top-[15px] left-[356px] h-5 w-[119px]"/>
            <Badge n={6} className="top-4 left-[337px]"/>
        </div>
        <div className="flex w-40 shrink-0 flex-col">
            {costActions.map((label, i) => (
                <button key={label} type="button" className="relative flex h-[25px] items-center gap-1 rounded-xs border border-[#7797c4] bg-linear-to-b from-[#e6effb] via-[#d3e1f5] to-[#e0ebfa] pl-2 text-black">
                    <LiraIcon/>{label}
                    {i === 3 && <Marker className="top-1 left-[5px] h-[21px] w-[120px]"/>}
                    {i === 3 && <Badge n={4} className="top-[2px] -left-[17px]"/>}
                </button>
            ))}
        </div>
    </section>
);

/* ---------- right side ---------- */

const groups = [
    "Kayıt Bilgileri",
    "Stok Bilgileri",
    "Miktarlar",
    "Sipariş Bilgileri",
    "Planlama Parametreleri",
    "Üretim Bilgileri",
    "Maliyet Bilgileri",
    "Kullanıcı Alanları",
];

const Properties: React.FC = () => (
    <aside className="w-[248px] shrink-0 border border-[#b3cbea] bg-white">
        {groups.map((group) => (
            <button key={group} type="button" className="flex h-[18px] w-full items-center gap-1 border-b border-[#6593cf] pt-px pl-1 text-left font-bold text-[#15428b]">
                <ToggleBox/>
                <span className={group === "Maliyet Bilgileri" ? "outline outline-dotted outline-black" : ""}>{group}</span>
            </button>
        ))}
    </aside>
);

const App: React.FC = () => {
    return (
        <div className="flex min-h-screen flex-col bg-[linear-gradient(to_bottom,#b9d1ea_27px,#dbe8f7_117px,#b9d1ea_117px)] font-['DejaVu_Sans_Condensed','Noto_Sans',sans-serif] text-[11px] leading-[14px]">
            <Gradients/>
            <TitleBar/>
            <main className="mr-[6px] mb-[3px] ml-[3px] flex flex-1 flex-col bg-[#e3efff] pr-[7px] pb-2 pl-1">
                <Toolbar/>
                <ProfileForm/>
                <TabStrip
                    className="mt-[6px]"
                    width="w-[127px]"
                    active={2}
                    tabs={["Genel Bilgiler", "Sipariş / Stok", "İşlem Detayı", "Açıklama", "Formüller", "İşlem Günlükleri", "Serbest Alanlar"]}
                />
                <div className="flex flex-1 border border-[#8ba3cc] bg-[#f3f8ff] p-2 shadow-[1px_1px_0_#c5d3e8]">
                    <Sidebar/>
                    <Splitter/>
                    <div className="flex min-w-0 flex-1 flex-col pb-[2px]">
                        <TabStrip
                            width="w-[157px]"
                            active={0}
                            tabs={["Ağaç Görünüm", "İhtiyaç Liste Görünüm", "İhtiyaç Toplam Görünüm", "Tedarik Liste Görünüm", "Oluşan Alsa İşlemler", "Oluşan Stok İşlemleri"]}
                        />
                        <div className="flex flex-1 border border-[#8ba3cc] p-2 pr-[11px] shadow-[1px_1px_0_#c5d3e8]">
                            <div className="flex min-w-0 flex-1 flex-col pb-[3px]">
                                <StockTree/>
                                <div className="flex h-4 shrink-0 flex-col items-center justify-center">
                                    <div className="flex h-1 w-full justify-center bg-linear-to-b from-white to-[#b5d4ff] text-[#3f73b5]">
                                        <svg className="mt-px h-[3px] w-[5px]" viewBox="0 0 5 3" fill="currentColor"><path d="M0 0h5L2.500 3z"/></svg>
                                    </div>
                                </div>
                                <TabStrip
                                    width="w-[127px]"
                                    active={3}
                                    badge={3}
                                    tabs={["Stoktan Tedarik", "Satınalmalar", "Üretim Bilgileri", "Maliyetler"]}
                                />
                                <CostPanel/>
                            </div>
                            <Splitter/>
                            <Properties/>
                        </div>
                    </div>
                </div>
            </main>
        </div>
    );
};

export default App;
